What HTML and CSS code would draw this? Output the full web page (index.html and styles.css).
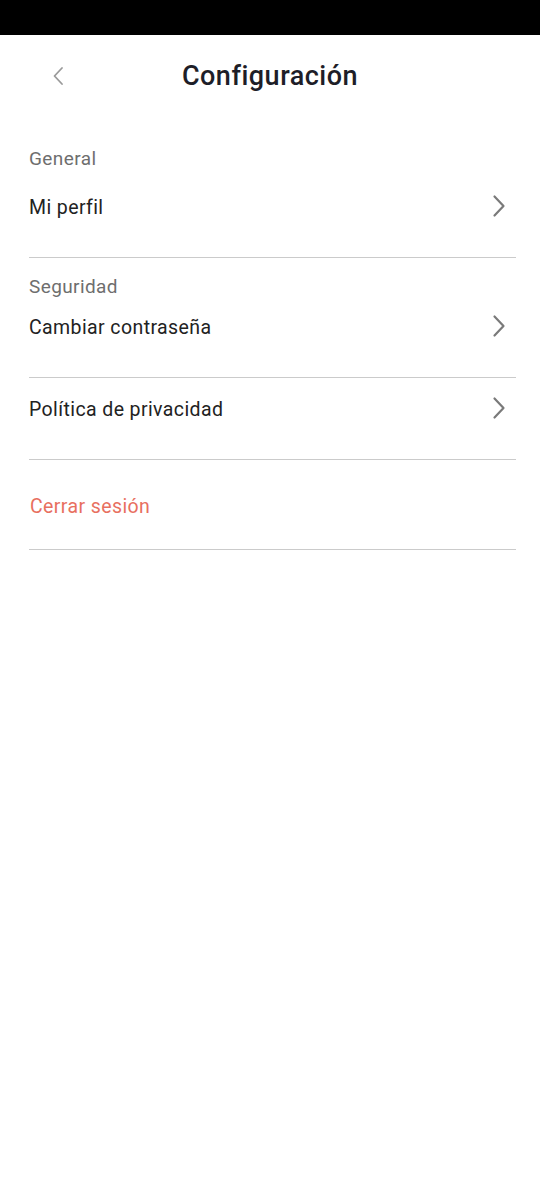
FILE: index.html
```html
<!doctype html>
<html>
  <head>
    <title>Configuración</title>
    <meta name="viewport" content="width=device-width">
    <link rel="stylesheet" href="styles.css">
  </head>
  <body>
    <div class="statusbar"></div>

    <header class="topbar">
      <a class="back" href="#">
        <svg width="12" height="20" viewBox="0 0 12 20"><path d="M10 2 L2.5 10 L10 18" fill="none" stroke="#9a9a9a" stroke-width="1.8" stroke-linecap="round" stroke-linejoin="round"/></svg>
      </a>
      <h1>Configuración</h1>
    </header>

    <main class="settings">
      <div class="group-label first">General</div>
      <a class="row row-top" href="#">
        <span>Mi perfil</span>
        <svg class="chev" width="14" height="24" viewBox="0 0 14 24"><path d="M2.5 2.5 L11.5 12 L2.5 21.5" fill="none" stroke="#7a7a7a" stroke-width="2.2" stroke-linecap="round" stroke-linejoin="round"/></svg>
      </a>

      <div class="group-label">Seguridad</div>
      <a class="row" href="#">
        <span>Cambiar contraseña</span>
        <svg class="chev" width="14" height="24" viewBox="0 0 14 24"><path d="M2.5 2.5 L11.5 12 L2.5 21.5" fill="none" stroke="#7a7a7a" stroke-width="2.2" stroke-linecap="round" stroke-linejoin="round"/></svg>
      </a>
      <a class="row row-plain" href="#">
        <span>Política de privacidad</span>
        <svg class="chev" width="14" height="24" viewBox="0 0 14 24"><path d="M2.5 2.5 L11.5 12 L2.5 21.5" fill="none" stroke="#7a7a7a" stroke-width="2.2" stroke-linecap="round" stroke-linejoin="round"/></svg>
      </a>

      <a class="row row-logout" href="#">
        <span>Cerrar sesión</span>
      </a>
    </main>
  </body>
</html>
```

FILE: styles.css
```css
html, body {
  margin: 0;
  padding: 0;
  background: #fff;
}
body {
  font-family: Roboto, "Noto Sans", sans-serif;
  color: #222;
}
a {
  text-decoration: none;
  color: inherit;
}
.statusbar {
  height: 35px;
  background: #000;
}
.topbar {
  height: 82px;
  display: flex;
  align-items: center;
  justify-content: center;
  position: relative;
}
.topbar h1 {
  margin: 0;
  font-size: 27px;
  font-weight: 500;
  letter-spacing: 0.5px;
  color: #1e1e28;
  line-height: 30px;
}
.back {
  position: absolute;
  left: 52px;
  top: 31px;
  display: flex;
}
.settings {
  padding: 0 24px 0 29px;
}
.group-label {
  font-size: 19px;
  line-height: 22px;
  letter-spacing: 0.4px;
  color: #6e6e6e;
  margin-top: 18px;
}
.group-label.first {
  margin-top: 31px;
}
.row {
  display: flex;
  align-items: center;
  justify-content: space-between;
  font-size: 19.5px;
  line-height: 22px;
  letter-spacing: 0.4px;
  padding: 19px 10px 38px 0;
  border-bottom: 1.5px solid #cbcbcb;
}
.row-top {
  padding-top: 27px;
  padding-bottom: 38px;
}
.row-plain {
  padding-top: 21px;
}
.row-logout {
  padding-top: 36px;
  padding-bottom: 31px;
  color: #e8705f;
}
.row-logout span {
  margin-left: 1px;
}
.chev {
  display: block;
  margin-top: -4px;
}
```
